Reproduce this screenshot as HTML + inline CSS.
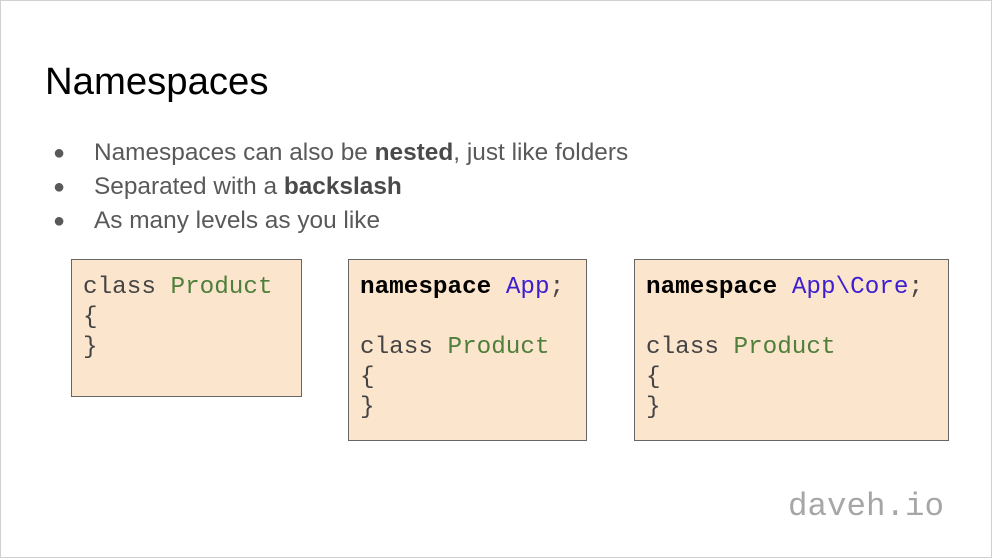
<!DOCTYPE html>
<html><head><style>
html,body{margin:0;padding:0;}
body{width:992px;height:558px;position:relative;background:#fff;overflow:hidden;font-family:"Liberation Sans",sans-serif;}
.frame{position:absolute;left:0;top:0;width:990px;height:556px;border:1px solid #d0d0d0;}
h1{position:absolute;left:45px;top:60px;margin:0;font-weight:normal;font-size:38.3px;color:#000;}
.b{position:absolute;left:94px;font-size:24.4px;color:#595959;}
.d{position:absolute;left:53px;font-size:20px;color:#595959;}
.b strong{color:#4a4a4a;}
.box{position:absolute;background:#fce5cd;border:1px solid #666;box-sizing:border-box;font-family:"Liberation Mono",monospace;font-size:24.3px;line-height:30px;color:#444;padding:13px 0 0 11px;white-space:pre;}
.g{color:#4f7f3a}.p{color:#3c1fd0}.k{font-weight:bold;color:#000}
.logo{position:absolute;left:788px;top:488px;font-family:"Liberation Mono",monospace;font-size:32.5px;color:#a6a6a6;}
</style></head><body>
<div class="frame"></div>
<h1>Namespaces</h1>
<div class="d" style="top:142px">●</div><div class="b" style="top:139px">Namespaces can also be <strong>nested</strong>, just like folders</div>
<div class="d" style="top:176px">●</div><div class="b" style="top:173px">Separated with a <strong>backslash</strong></div>
<div class="d" style="top:210px">●</div><div class="b" style="top:207px">As many levels as you like</div>
<div class="box" style="left:71px;top:259px;width:231px;height:138px;">class <span class="g">Product</span>
{
}</div>
<div class="box" style="left:348px;top:259px;width:239px;height:182px;"><span class="k">namespace</span> <span class="p">App</span>;

class <span class="g">Product</span>
{
}</div>
<div class="box" style="left:634px;top:259px;width:315px;height:182px;"><span class="k">namespace</span> <span class="p">App\Core</span>;

class <span class="g">Product</span>
{
}</div>
<div class="logo">daveh.io</div>
</body></html>
